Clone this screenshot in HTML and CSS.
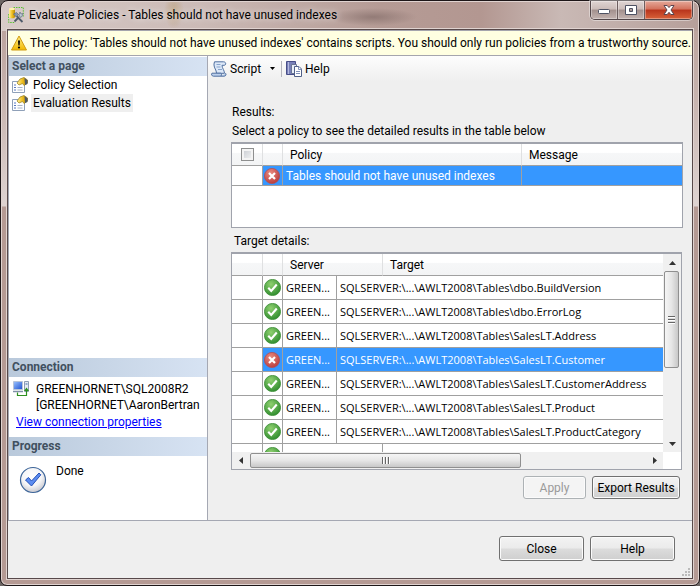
FILE: index.html
```html
<!DOCTYPE html>
<html lang="en">
<head>
<meta charset="utf-8">
<title>Evaluate Policies - Tables should not have unused indexes</title>
<link rel="stylesheet" href="styles.css">
</head>
<body>
<svg class="defs" width="0" height="0" aria-hidden="true">
  <defs>
    <radialGradient id="green" cx=".4" cy=".3" r=".75"><stop offset="0" stop-color="#8fd070"/><stop offset="1" stop-color="#2c8a2c"/></radialGradient>
    <radialGradient id="red" cx=".4" cy=".3" r=".75"><stop offset="0" stop-color="#e88b80"/><stop offset="1" stop-color="#b93a3a"/></radialGradient>
    <radialGradient id="pearl" cx=".45" cy=".35" r=".65"><stop offset="0" stop-color="#fff"/><stop offset=".6" stop-color="#f4f4f6"/><stop offset="1" stop-color="#c9c9d0"/></radialGradient>
    <linearGradient id="gold" x2="1"><stop offset="0" stop-color="#fff0a0"/><stop offset=".5" stop-color="#f0c020"/><stop offset="1" stop-color="#b88a08"/></linearGradient>
    <linearGradient id="warn" y2="1" x2="0"><stop offset="0" stop-color="#fff08a"/><stop offset="1" stop-color="#f2b800"/></linearGradient>
    <linearGradient id="screen" x2="1" y2="1"><stop offset="0" stop-color="#9cc4ff"/><stop offset="1" stop-color="#1c4fd0"/></linearGradient>
    <symbol id="ok" viewBox="0 0 16 16"><circle cx="8" cy="8" r="7.6" fill="url(#green)" stroke="#3d8f38" stroke-width=".8"/><path d="M4 8.3l2.8 2.9L12 5.2" fill="none" stroke="#fff" stroke-width="2"/></symbol>
    <symbol id="fail" viewBox="0 0 16 16"><circle cx="8" cy="8" r="7.6" fill="url(#red)" stroke="#b05058" stroke-width=".8"/><path d="M5 5l6 6M11 5l-6 6" stroke="#fff" stroke-width="2.2"/></symbol>
    <symbol id="page" viewBox="0 0 16 16"><path d="M.5 4.500h12v11H.5z" fill="#fff" stroke="#8fa0b8"/><path d="M2 8h2M2 10.500h2M2 13h2" stroke="#5878c0"/><path d="M5.500 10.500h5M5.500 13h5" stroke="#a8b4c8"/><path d="M5 6l3-4 4-1.500 3.500 2.500v3L12 8.500l-1.500-2L7 8z" fill="url(#gold)" stroke="#a08828" stroke-width=".8"/><path d="M12.500 1l3 2.200V7l-2.500 1" fill="#4c5868"/></symbol>
  </defs>
</svg>
<div class="window">
  <header class="titlebar">
    <svg class="i16" viewBox="0 0 16 16"><path d="M5.500.5h9.800v9M.7 7v8.500h6" fill="none" stroke="#58c030" stroke-dasharray="1.500 1"/><path d="M1 1.800v8c0 2 6 2 6 0v-8z" fill="url(#gold)"/><ellipse cx="4" cy="1.900" rx="3" ry="1.200" fill="#fff2b0"/><path d="M14.500 15L8 8.500M6.500 14.500L11 10" stroke="#4e5a6a" stroke-width="1.800"/><path d="M5.500 7l3-1.500 2 2-2 2.500z" fill="#8494a8" stroke="#566478" stroke-width=".6"/><path d="M11 7.500l1-2.500 1 2 2-.5-1 3-2 1z" fill="#bcc8d4" stroke="#607084" stroke-width=".7"/></svg>
    <h1>Evaluate Policies - Tables should not have unused indexes</h1>
    <div class="caption">
      <button class="min" aria-label="Minimize"><svg width="14" height="12" viewBox="0 0 14 12"><rect x="1.500" y="5.500" width="11" height="4" rx="1" fill="#fff" stroke="#4e5263"/></svg></button>
      <button class="max" aria-label="Maximize"><svg width="14" height="12" viewBox="0 0 14 12"><path d="M1.500 1.500h11v9h-11zM5.500 4.500v3h3v-3z" fill="#fff" fill-rule="evenodd" stroke="#4e5263"/></svg></button>
      <button class="shut" aria-label="Close window"><svg width="14" height="12" viewBox="0 0 14 12"><path d="M2 1.500h3.200L7 3.600l1.800-2.100H12L9 6l3 4.500H8.800L7 8.300l-1.800 2.200H2L5 6z" fill="#fff" stroke="#5a4650"/></svg></button>
    </div>
  </header>
  <div class="client">
    <div class="warning" role="alert">
      <svg class="i16" viewBox="0 0 16 16"><path d="M8 1L15.500 15H.5z" fill="url(#warn)" stroke="#d09a10" stroke-linejoin="round"/><path d="M7 5.500h2l-.4 5H7.400z" fill="#000"/><circle cx="8" cy="12.500" r="1.100"/></svg>
      <span>The policy: 'Tables should not have unused indexes' contains scripts. You should only run policies from a trustworthy source.</span>
    </div>
    <div class="main">
      <aside class="side">
        <h2>Select a page</h2>
        <nav>
          <a href="#selection"><svg class="i16"><use href="#page"/></svg><span>Policy Selection</span></a>
          <a href="#results" class="current"><svg class="i16"><use href="#page"/></svg><span>Evaluation Results</span></a>
        </nav>
        <h2>Connection</h2>
        <div class="connection">
          <svg class="i16" viewBox="0 0 16 16"><path d="M.5.5h9v8h-9z" fill="url(#screen)" stroke="#b8c4d8"/><path d="M0 10.500h10" stroke="#8090a8" stroke-width="1.500"/><path d="M11.500.5h4v10h-4z" fill="#e4ebf4" stroke="#8c9cb4"/><path d="M12.500 3h2" stroke="#4068a8"/><path d="M4.500 11.500v3h9V9" fill="none" stroke="#2e9020" stroke-width="1.200"/><path d="M11 10l2.500-3.500L16 10z" fill="#2e9020"/></svg>
          <p>GREENHORNET\SQL2008R2<br>[GREENHORNET\AaronBertran</p>
        </div>
        <a class="props" href="#properties">View connection properties</a>
        <h2>Progress</h2>
        <div class="progress">
          <svg width="28" height="28" viewBox="0 0 28 28"><circle cx="14" cy="14" r="12.500" fill="url(#pearl)" stroke="#3c6498" stroke-width="1.200"/><path d="M6.500 14l3-2.500 3 3.500 7.500-8 1.800 1.800L12.500 20z" fill="#5c8cf0" stroke="#2450b8"/></svg>
          <span>Done</span>
        </div>
      </aside>
      <section class="content">
        <div class="toolbar">
          <button><svg class="i16" viewBox="0 0 16 16"><path d="M3.500.8h9c2.500 0 3 3 .8 3.500H11c0 3 2.500 5 2.500 8H5.500C5.500 9 3 7 3 4V3z" fill="#dce8f8" stroke="#5070a0"/><path d="M1 12.200h8.500c1.500 0 1.500 3-.2 3H2.500c-2 0-2.500-2.500-1.500-3zM9.500 15.200h3.500c2 0 2.500-2 1.500-3" fill="#bcd0ec" stroke="#5070a0"/><path d="M5.500 3.500h4M5.500 6h4M7 8.500h4" stroke="#88a4cc"/></svg>Script</button>
          <button class="drop" aria-label="Script options"><svg width="5" height="3" viewBox="0 0 5 3"><path d="M0 0h5L2.500 3z"/></svg></button>
          <i class="sep"></i>
          <button><svg class="i16" viewBox="0 0 16 16"><path d="M.5.5h9v13h-9z" fill="#7880b8" stroke="#484e88"/><path d="M2.500 1v12" stroke="#b4b8e0"/><path d="M5.500 3.500h5v9h-5z" fill="#e8eef8" stroke="#6a7494"/><path d="M8.500 5.500h4.500l2.500 2.500v7.500h-7z" fill="#fff" stroke="#506088"/><path d="M12.500 5.500v3h3M10 10.500h4M10 12.500h4" fill="none" stroke="#8090b8"/></svg>Help</button>
        </div>
        <div class="body">
          <p class="label">Results:</p>
          <p class="label hint">Select a policy to see the detailed results in the table below</p>
          <div class="grid results">
            <table>
              <colgroup><col class="c-check"><col class="c-icon"><col class="c-policy"><col></colgroup>
              <thead><tr><th class="check"><input type="checkbox" aria-label="Select all policies"></th><th></th><th>Policy</th><th>Message</th></tr></thead>
              <tbody><tr class="selected"><td></td><td class="icon"><svg class="i16"><use href="#fail"/></svg></td><td>Tables should not have unused indexes</td><td></td></tr></tbody>
            </table>
          </div>
          <p class="label target-label">Target details:</p>
          <div class="grid details">
            <div class="view">
              <table>
                <colgroup><col class="c-check"><col class="c-icon"><col class="c-server"><col class="c-rest"><col></colgroup>
                <thead><tr><th></th><th></th><th colspan="2">Server</th><th>Target</th></tr></thead>
                <tbody>
                  <tr><td></td><td class="icon"><svg class="i18"><use href="#ok"/></svg></td><td>GREEN...</td><td colspan="2">SQLSERVER:\...\AWLT2008\Tables\dbo.BuildVersion</td></tr>
                  <tr><td></td><td class="icon"><svg class="i18"><use href="#ok"/></svg></td><td>GREEN...</td><td colspan="2">SQLSERVER:\...\AWLT2008\Tables\dbo.ErrorLog</td></tr>
                  <tr><td></td><td class="icon"><svg class="i18"><use href="#ok"/></svg></td><td>GREEN...</td><td colspan="2">SQLSERVER:\...\AWLT2008\Tables\SalesLT.Address</td></tr>
                  <tr class="selected"><td></td><td class="icon"><svg class="i16"><use href="#fail"/></svg></td><td>GREEN...</td><td colspan="2">SQLSERVER:\...\AWLT2008\Tables\SalesLT.Customer</td></tr>
                  <tr><td></td><td class="icon"><svg class="i18"><use href="#ok"/></svg></td><td>GREEN...</td><td colspan="2">SQLSERVER:\...\AWLT2008\Tables\SalesLT.CustomerAddress</td></tr>
                  <tr><td></td><td class="icon"><svg class="i18"><use href="#ok"/></svg></td><td>GREEN...</td><td colspan="2">SQLSERVER:\...\AWLT2008\Tables\SalesLT.Product</td></tr>
                  <tr><td></td><td class="icon"><svg class="i18"><use href="#ok"/></svg></td><td>GREEN...</td><td colspan="2">SQLSERVER:\...\AWLT2008\Tables\SalesLT.ProductCategory</td></tr>
                  <tr><td></td><td class="icon"><svg class="i18"><use href="#ok"/></svg></td><td colspan="2"></td><td></td></tr>
                </tbody>
              </table>
            </div>
            <div class="vbar">
              <button aria-label="Scroll up"><svg width="7" height="4" viewBox="0 0 7 4"><path d="M0 4h7L3.500 0z"/></svg></button>
              <div class="thumb"><i></i></div>
              <div class="space"></div>
              <button aria-label="Scroll down"><svg width="7" height="4" viewBox="0 0 7 4"><path d="M0 0h7L3.500 4z"/></svg></button>
            </div>
            <div class="hbar">
              <button aria-label="Scroll left"><svg width="4" height="7" viewBox="0 0 4 7"><path d="M4 0v7L0 3.500z"/></svg></button>
              <div class="thumb"><i></i></div>
              <div class="space"></div>
              <button aria-label="Scroll right"><svg width="4" height="7" viewBox="0 0 4 7"><path d="M0 0v7l4-3.500z"/></svg></button>
            </div>
          </div>
          <div class="actions">
            <button class="btn apply" disabled>Apply</button>
            <button class="btn export">Export Results</button>
          </div>
        </div>
      </section>
    </div>
    <footer class="foot">
      <button class="btn">Close</button>
      <button class="btn">Help</button>
      <svg class="grip" width="8" height="8" viewBox="0 0 8 8"><path d="M6 0h2v2H6zM3 3h2v2H3zM6 3h2v2H6zM0 6h2v2H0zM3 6h2v2H3zM6 6h2v2H6z" fill="#bbb"/></svg>
    </footer>
  </div>
</div>
</body>
</html>
```
FILE: styles.css
```css
* { box-sizing: border-box; }
body {
  margin: 0;
  background: #6d6664;
  color: #000;
  font: 12px/16px Roboto, "Open Sans", sans-serif;
}
h1, h2, p { margin: 0; font-size: 12px; font-weight: 400; }
button { font: inherit; color: inherit; margin: 0; padding: 0; border: 0; background: none; }
a { color: inherit; text-decoration: none; }
svg { display: block; flex: none; }
.defs { position: absolute; }
.i16 { width: 16px; height: 16px; }
.i18 { width: 17px; height: 17px; }

.window {
  display: flex;
  flex-direction: column;
  min-height: 100vh;
  padding: 0 6px 6px;
  border: 1px solid #1d1618;
  border-radius: 8px 8px 7px 7px;
  box-shadow: inset 0 0 0 1px #e0d3d0;
  background:
    radial-gradient(ellipse 44px 9px at 372px 16px, #8a736fcc, #8a736f00),
    radial-gradient(ellipse 10px 18px at 173px 10px, #b99a6a99, #b99a6a00),
    linear-gradient(90deg, #d8cbc8 0, #cbbab6 200px, #b59b95 380px, #b39791 480px, #c9b9b5 560px, #b69f9a 100%) 0 0 / 100% 30px no-repeat,
    linear-gradient(#b79d97 0, #c6b2ad 90px, #ded3d1 205px, #b59a94 206px, #b59a94 100%);
}
.titlebar {
  display: flex;
  align-items: center;
  height: 28px;
  padding-left: 1px;
}
.titlebar h1 { margin-left: 5px; flex: 1; text-shadow: 0 0 6px #fff8, 0 0 10px #fff8; }
.caption {
  display: flex;
  align-self: flex-start;
  height: 19px;
  border: 1px solid #54474a;
  border-top: 0;
  border-radius: 0 0 5px 5px;
  overflow: hidden;
  box-shadow: 0 0 0 1px #ffffff66;
}
.caption button {
  display: flex;
  align-items: center;
  justify-content: center;
  width: 27px;
  border-right: 1px solid #6c5d5e;
  background: linear-gradient(#dfd5d3 0, #cbbcb9 45%, #a3908d 50%, #c3b3b0 100%);
  box-shadow: inset 0 0 0 1px #ffffff55;
}
.caption .shut { width: 47px; border: 0; background: linear-gradient(#e5a99a 0, #d3715c 45%, #b9341c 50%, #d8623a 100%); }

.client {
  display: flex;
  flex-direction: column;
  flex: 1;
  border: 1px solid #57494a;
  box-shadow: 0 0 0 1px #e0d3d0;
  background: #efefef;
}
.warning {
  display: flex;
  align-items: center;
  gap: 3px;
  height: 26px;
  padding: 0 3px;
  border: solid #a5a5ad;
  border-width: 1px 0;
  background: #ffffe1;
  white-space: nowrap;
}
.main { display: flex; flex: 1; border-bottom: 1px solid #a5a8b3; }

.side {
  display: flex;
  flex-direction: column;
  flex: none;
  width: 200px;
  border: solid #a5a8b3;
  border-width: 0 1px;
  background: #fff;
}
.side h2 {
  height: 19px;
  padding-left: 3px;
  background: linear-gradient(90deg, #b9c9db, #d7e3f3);
  color: #41505f;
  font-weight: 700;
  line-height: 19px;
}
.side h2:first-child { margin-top: 1px; }
.side nav { flex: 1; }
.side nav a { display: flex; align-items: center; gap: 3px; height: 18px; padding-left: 3px; }
.side nav span { padding: 1px 2px; }
.current span { background: #efefef; }
.connection { display: flex; gap: 7px; padding: 4px 0 0 4px; line-height: 16px; white-space: nowrap; }
.props { margin: 1px 0 7px 7px; color: #00f; text-decoration: underline; }
.progress { display: flex; gap: 9px; height: 64px; padding: 7px 10px; }
.progress svg { margin-top: 3px; }

.content { display: flex; flex-direction: column; flex: 1; min-width: 0; }
.toolbar {
  display: flex;
  align-items: center;
  height: 25px;
  padding-left: 3px;
  background: linear-gradient(#fdfdfd, #efefef);
}
.toolbar button { display: flex; align-items: center; gap: 3px; }
.toolbar .drop { margin: 0 6px 0 9px; }
.sep { width: 1px; height: 16px; margin-right: 4px; background: #b5b5bd; }

.body { flex: 1; padding: 23px 9px 0 23px; }
.label { padding-left: 1px; }
.hint { margin: 3px 0; }
.target-label { margin: 5px 0 3px; padding-left: 3px; }
.grid { border: 1px solid #a0a3ac; border-top-width: 2px; background: #fff; overflow: hidden; }
table { width: 100%; table-layout: fixed; border-collapse: separate; border-spacing: 0; }
.c-check { width: 31px; }
.c-icon { width: 20px; }
.c-policy { width: 239px; }
.c-server { width: 54px; }
.c-rest { width: 46px; }
th {
  height: 22px;
  padding: 0 7px;
  border-right: 1px solid #dfe0e1;
  border-bottom: 1px solid #a0a0a0;
  background: linear-gradient(#fff 0, #fff 40%, #f6f7f8 45%, #f3f4f5 100%);
  font-weight: 400;
  text-align: left;
}
td {
  height: 24px;
  padding: 0 3px;
  border-right: 1px solid #a0a0a0;
  border-bottom: 1px solid #a0a0a0;
  white-space: nowrap;
  overflow: hidden;
}
.details td { font-family: "Open Sans", sans-serif; font-size: 11px; }
th:last-child, td:last-child { border-right: 0; }
td.icon { padding: 0 1px; }
.selected td:not(:first-child) { background: #3697ff; color: #fff; }
.check { padding: 0; }
.check input {
  display: block;
  appearance: none;
  width: 13px;
  height: 13px;
  margin: 0 auto;
  border: 1px solid #8e8f8f;
  background: linear-gradient(135deg, #c5c9cf, #f6f6f6);
  box-shadow: inset 0 0 0 2px #f4f4f4;
}
.results { height: 86px; }
.results td { height: 20px; }

.details {
  display: grid;
  grid-template: 198px 17px / minmax(0, 1fr) 18px;
  margin-right: 1px;
}
.view { overflow: hidden; }
.vbar, .hbar { display: flex; background: #f0f0f0; fill: #333; }
.vbar { flex-direction: column; padding: 0 1px; }
.vbar button, .hbar button { display: flex; align-items: center; justify-content: center; width: 17px; height: 17px; }
.space { flex: 1; }
.thumb { display: flex; align-items: center; justify-content: center; border: 1px solid #8f8f8f; border-radius: 2px; }
.vbar .thumb { height: 97px; width: 15px; background: linear-gradient(90deg, #f5f5f5, #e6e6e6 50%, #c8c8c8); }
.hbar .thumb { width: 271px; height: 15px; margin: 1px 0 0 1px; background: linear-gradient(#f5f5f5, #e6e6e6 50%, #c8c8c8); }
.vbar i { width: 7px; height: 8px; background: repeating-linear-gradient(#666 0 1px, #fff 1px 2px, #ddd 2px 3px); }
.hbar i { width: 8px; height: 7px; background: repeating-linear-gradient(90deg, #666 0 1px, #fff 1px 2px, #ddd 2px 3px); }

.actions { display: flex; justify-content: flex-end; gap: 6px; margin: 6px 3px 0 0; }
.btn {
  width: 85px;
  height: 25px;
  border: 1px solid #707070;
  border-radius: 3px;
  background: linear-gradient(#f3f3f3 0, #ebebeb 48%, #dcdcdc 52%, #cfcfcf 100%);
  box-shadow: inset 0 0 0 1px #fbfbfb;
}
.actions .btn { height: 23px; }
.apply { width: 63px; }
.export { width: 88px; }
.btn:disabled { border-color: #adb2b5; background: #f4f4f4; color: #9a9a9a; }
.foot { display: flex; gap: 6px; justify-content: flex-end; height: 57px; padding: 15px 2px 0 0; }
.grip { align-self: flex-end; margin: 0 0 2px 1px; }
```
